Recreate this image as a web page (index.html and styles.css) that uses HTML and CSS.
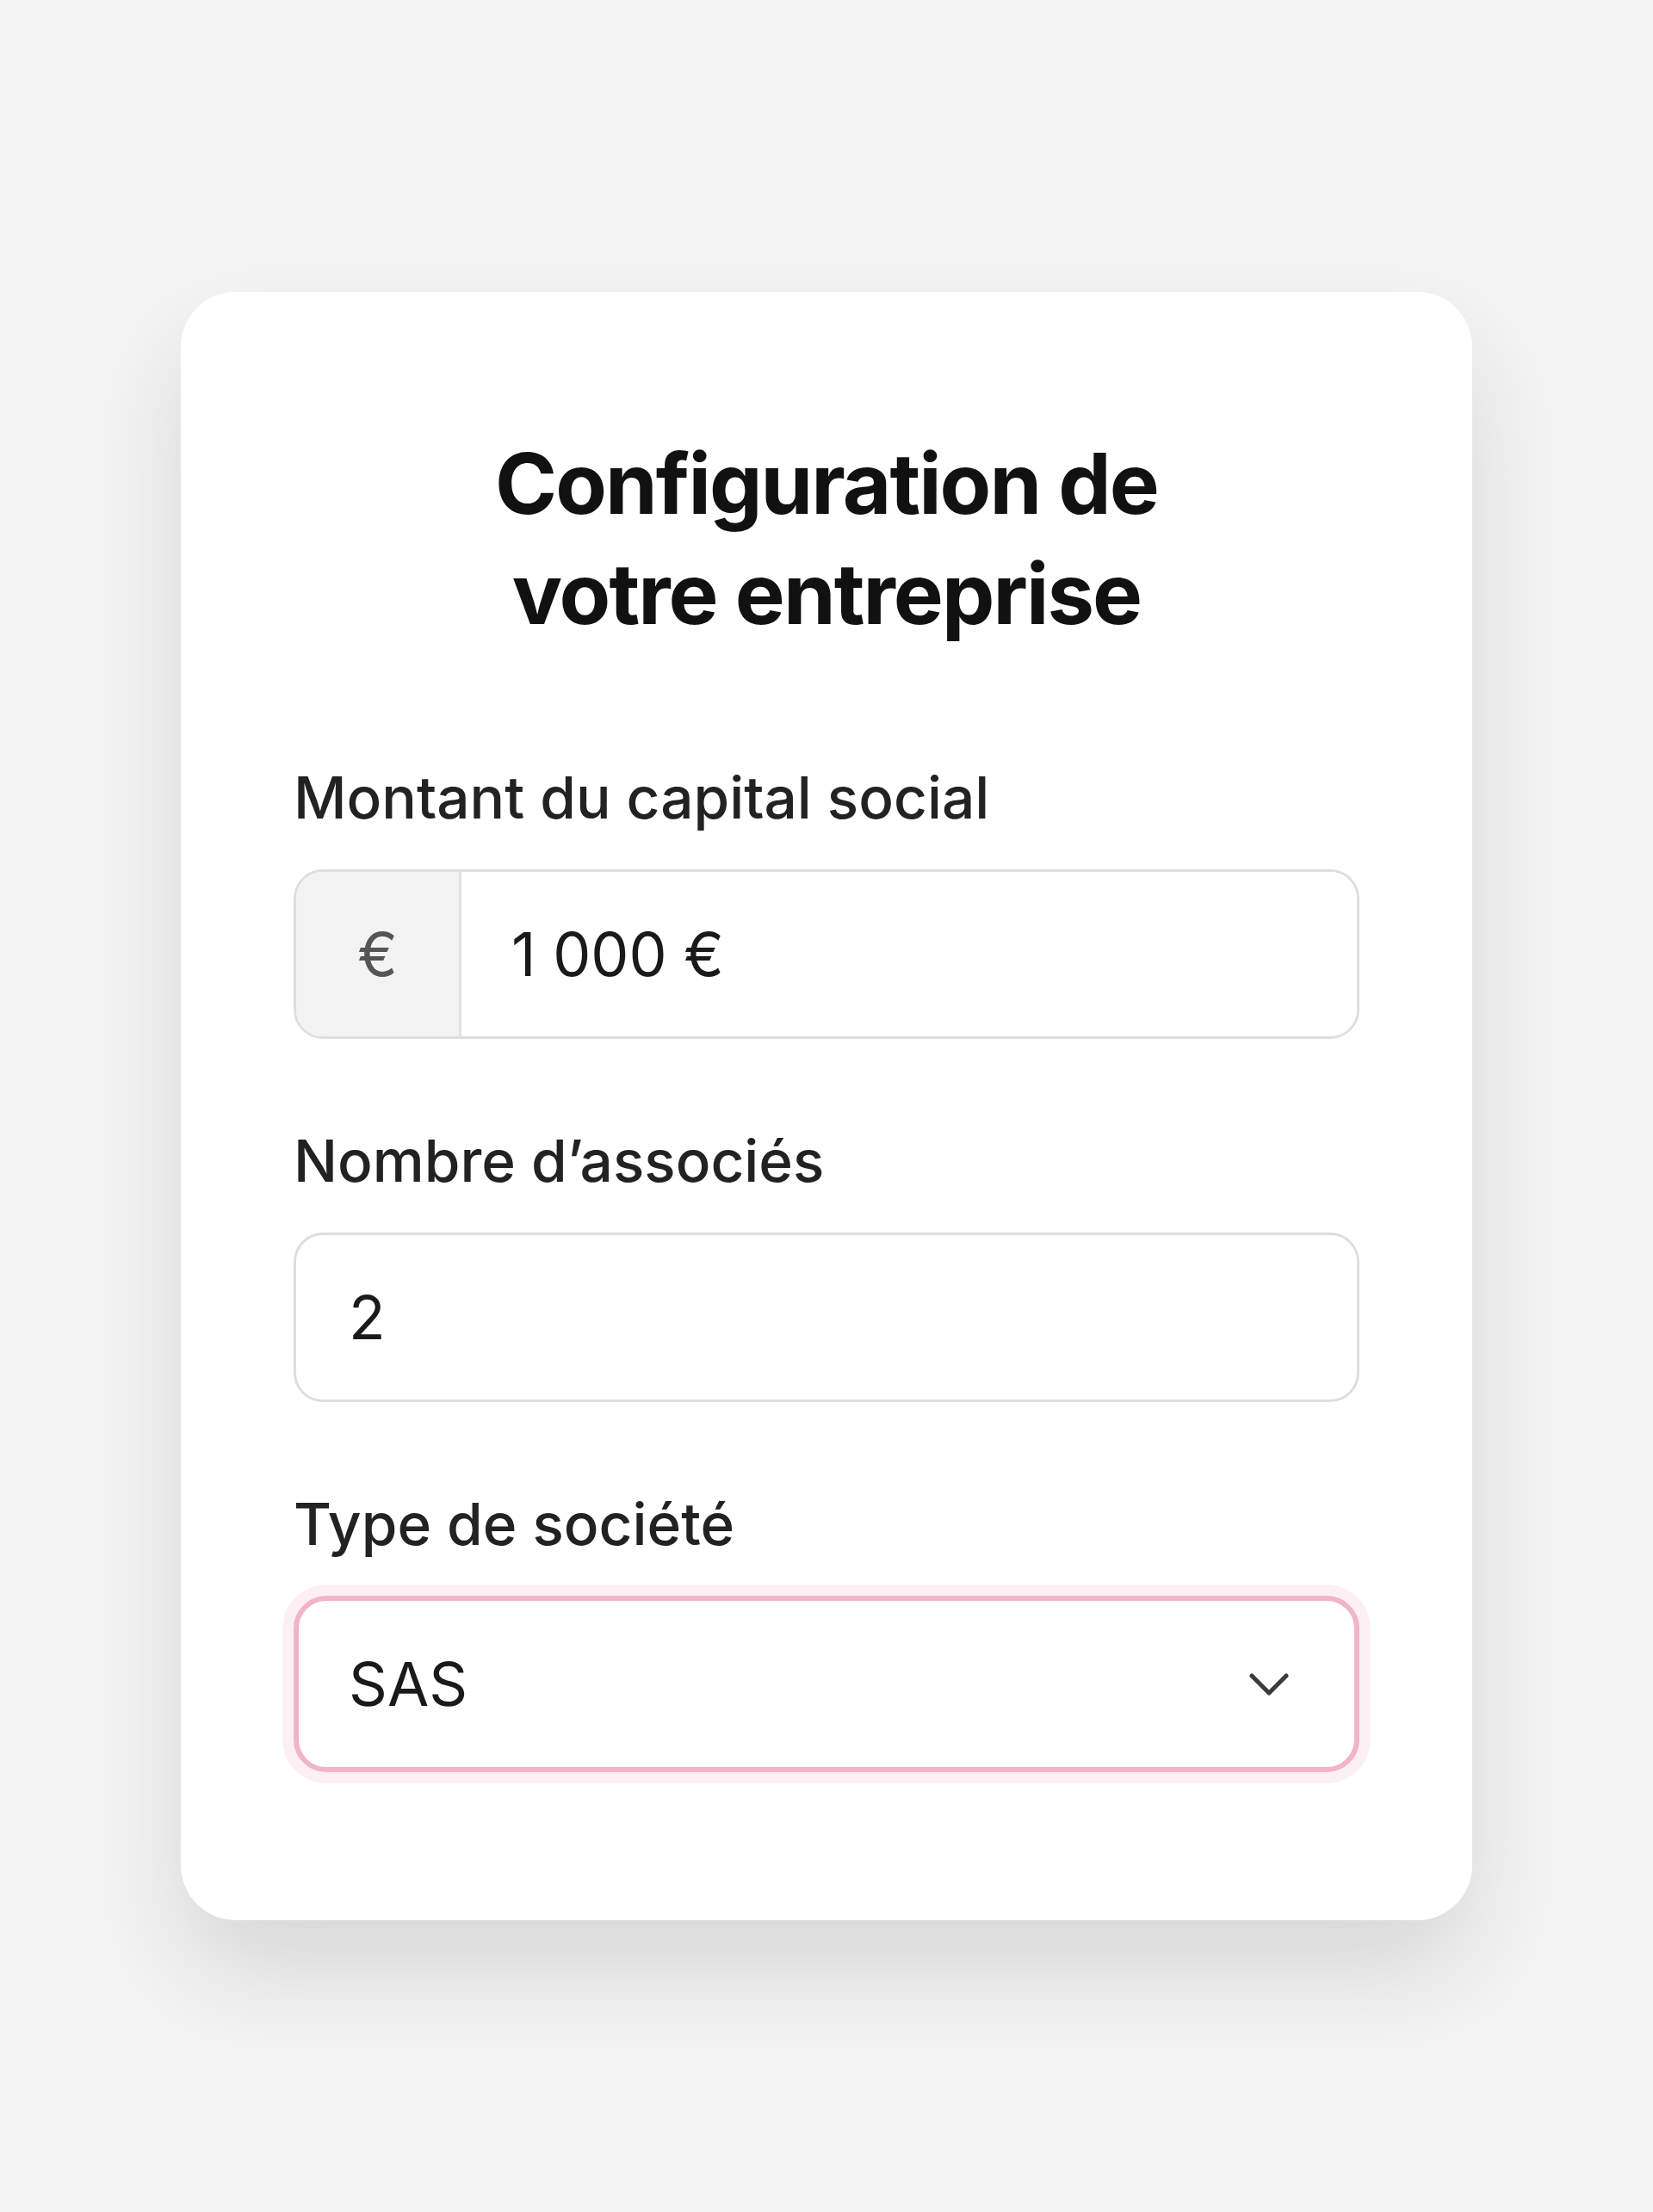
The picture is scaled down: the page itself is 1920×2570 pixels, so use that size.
FILE: index.html
```html
<!DOCTYPE html>
<html lang="fr">
<head>
    <meta charset="UTF-8">
    <meta name="viewport" content="width=device-width, initial-scale=1.0">
    <title>Configuration de votre entreprise</title>
    <link rel="stylesheet" href="styles.css">
</head>
<body>
    <div class="card">
        <h1 class="card-title">Configuration de votre entreprise</h1>

        <div class="field">
            <label class="field-label" for="capital">Montant du capital social</label>
            <div class="input-group">
                <span class="addon">€</span>
                <input class="group-input" type="text" id="capital" value="1&nbsp;000&nbsp;€">
            </div>
        </div>

        <div class="field">
            <label class="field-label" for="associes">Nombre d’associés</label>
            <input class="text-input" type="text" id="associes" inputmode="numeric" value="2">
        </div>

        <div class="field">
            <label class="field-label" for="type">Type de société</label>
            <div class="select-wrap">
                <select class="select-input" id="type">
                    <option selected>SAS</option>
                    <option>SASU</option>
                    <option>SARL</option>
                    <option>EURL</option>
                </select>
                <svg class="chevron" width="46" height="26" viewBox="0 0 46 26" aria-hidden="true">
                    <path d="M3 3 L23 23 L43 3" fill="none" stroke="#3b3b3b" stroke-width="5" stroke-linecap="round" stroke-linejoin="round"/>
                </svg>
            </div>
        </div>
    </div>
</body>
</html>
```

FILE: styles.css
```css
/* base */
* {
    box-sizing: border-box;
    font-family: Inter, "Noto Sans", sans-serif;
}

body {
    margin: 0;
    min-height: 100vh;
    background: #f4f4f4;
    display: flex;
    align-items: center;
    justify-content: center;
    color: #1f1f1f;
}

/* card */
.card {
    width: 1500px;
    background: #fff;
    border-radius: 64px;
    padding: 159px 131px 172px;
    box-shadow: 0 60px 120px rgba(0, 0, 0, 0.12);
    display: flex;
    flex-direction: column;
    gap: 88px;
}

.card-title {
    margin: 0 auto 31px;
    max-width: 840px;
    font-size: 97.5px;
    line-height: 128px;
    font-weight: 700;
    letter-spacing: -0.02em;
    text-align: center;
    color: #111;
}

/* fields */
.field {
    display: flex;
    flex-direction: column;
    gap: 29px;
}

.field-label {
    font-size: 67.5px;
    line-height: 108px;
    font-weight: 500;
    color: #222;
}

.text-input,
.select-input,
.group-input {
    font-size: 70px;
    color: #1a1a1a;
    outline: none;
    background: #fff;
}

.text-input {
    height: 197px;
    border: 3px solid #dedede;
    border-radius: 34px;
    padding: 0 61px;
}

.input-group {
    display: flex;
    height: 197px;
    border: 3px solid #dedede;
    border-radius: 34px;
    overflow: hidden;
}

.addon {
    width: 192px;
    flex-shrink: 0;
    display: flex;
    align-items: center;
    justify-content: center;
    background: #f3f3f3;
    border-right: 3px solid #e2e2e2;
    font-size: 70px;
    color: #555;
}

.group-input {
    flex: 1;
    min-width: 0;
    border: none;
    padding: 0 58px;
}

/* select */
.select-wrap {
    position: relative;
}

.select-input {
    width: 100%;
    height: 205px;
    appearance: none;
    -webkit-appearance: none;
    border: 6px solid #f2b4c7;
    border-radius: 38px;
    padding: 0 58px;
    box-shadow: 0 0 0 13px #fdf0f4;
}

.chevron {
    position: absolute;
    right: 82px;
    top: 90px;
    pointer-events: none;
}
```
